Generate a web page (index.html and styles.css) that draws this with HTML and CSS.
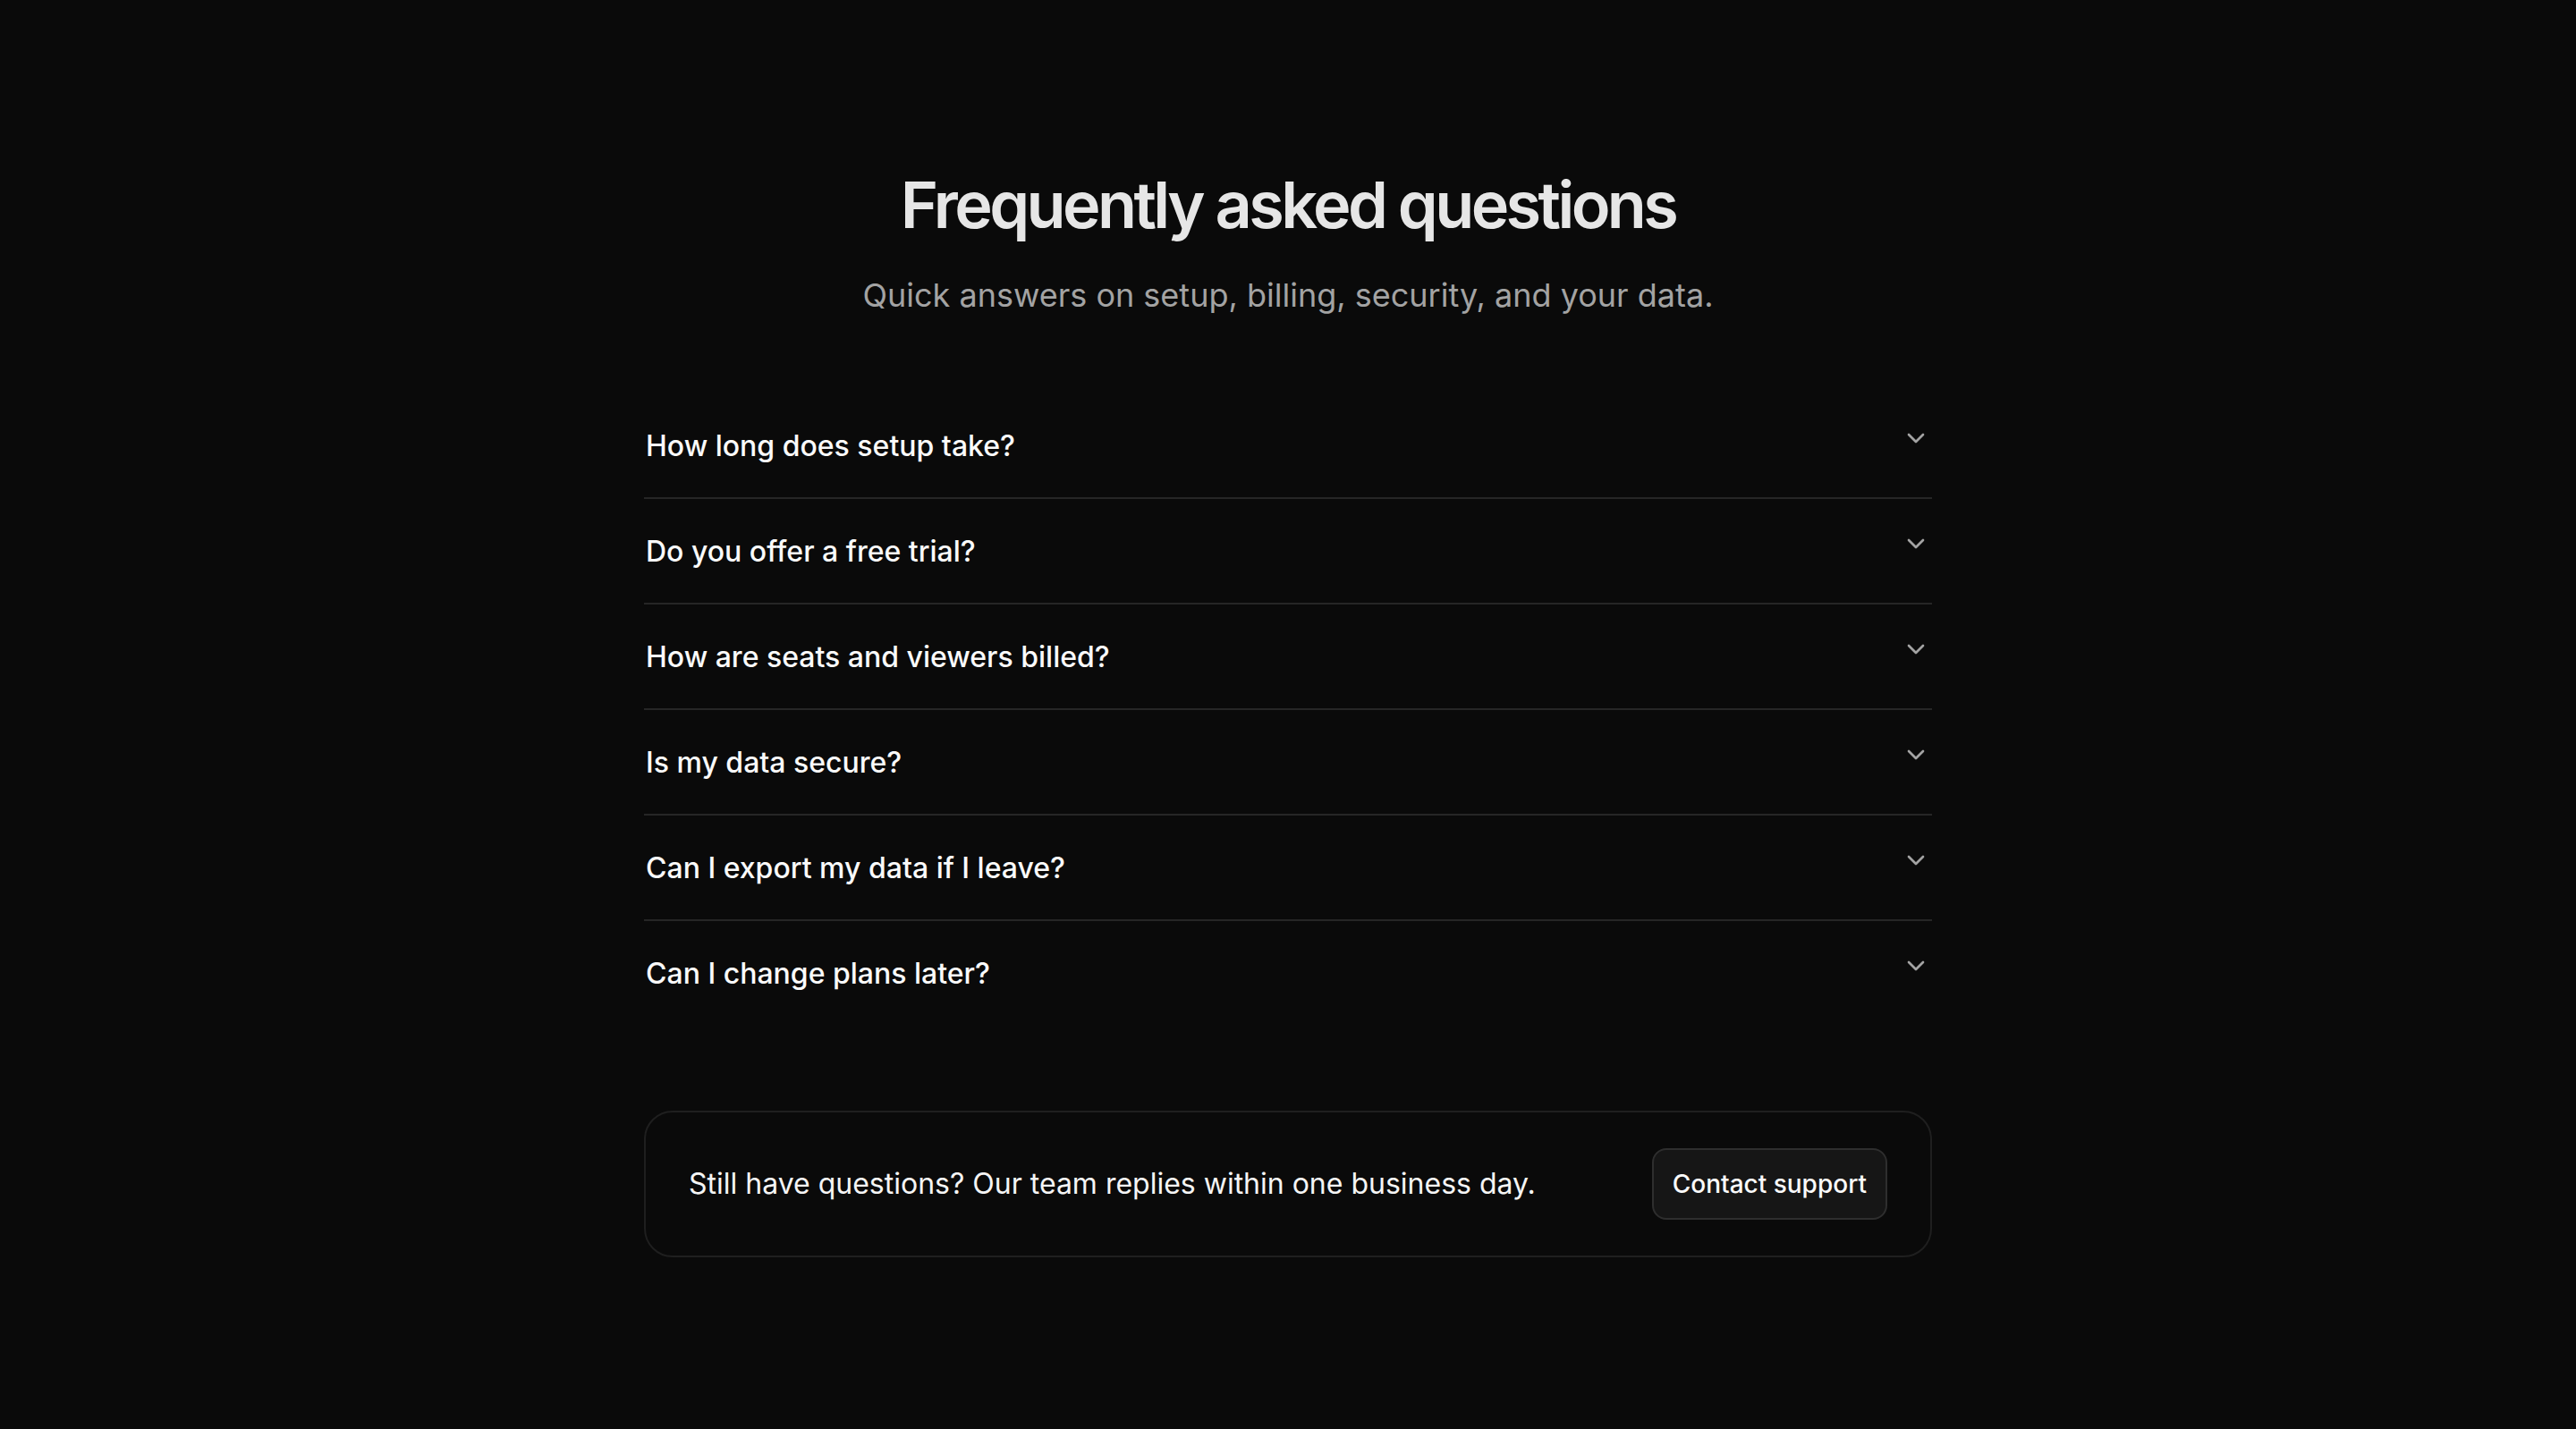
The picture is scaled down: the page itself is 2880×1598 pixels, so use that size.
FILE: index.html
```html
<!DOCTYPE html>
<html lang="en">
<head>
<meta charset="utf-8">
<title>FAQ</title>
<link rel="stylesheet" href="styles.css">
</head>
<body>
<main class="faq">
  <header class="faq-head">
    <h1 class="faq-title">Frequently asked questions</h1>
    <p class="faq-sub">Quick answers on setup, billing, security, and your data.</p>
  </header>
  <ul class="faq-list">
    <li class="faq-item"><span class="faq-q">How long does setup take?</span><svg class="chev" viewBox="0 0 24 24" fill="none" stroke="currentColor" stroke-width="2" stroke-linecap="round" stroke-linejoin="round"><path d="m6 9 6 6 6-6"/></svg></li>
    <li class="faq-item"><span class="faq-q">Do you offer a free trial?</span><svg class="chev" viewBox="0 0 24 24" fill="none" stroke="currentColor" stroke-width="2" stroke-linecap="round" stroke-linejoin="round"><path d="m6 9 6 6 6-6"/></svg></li>
    <li class="faq-item"><span class="faq-q">How are seats and viewers billed?</span><svg class="chev" viewBox="0 0 24 24" fill="none" stroke="currentColor" stroke-width="2" stroke-linecap="round" stroke-linejoin="round"><path d="m6 9 6 6 6-6"/></svg></li>
    <li class="faq-item"><span class="faq-q">Is my data secure?</span><svg class="chev" viewBox="0 0 24 24" fill="none" stroke="currentColor" stroke-width="2" stroke-linecap="round" stroke-linejoin="round"><path d="m6 9 6 6 6-6"/></svg></li>
    <li class="faq-item"><span class="faq-q">Can I export my data if I leave?</span><svg class="chev" viewBox="0 0 24 24" fill="none" stroke="currentColor" stroke-width="2" stroke-linecap="round" stroke-linejoin="round"><path d="m6 9 6 6 6-6"/></svg></li>
    <li class="faq-item"><span class="faq-q">Can I change plans later?</span><svg class="chev" viewBox="0 0 24 24" fill="none" stroke="currentColor" stroke-width="2" stroke-linecap="round" stroke-linejoin="round"><path d="m6 9 6 6 6-6"/></svg></li>
  </ul>
  <div class="support">
    <p class="support-text">Still have questions? Our team replies within one business day.</p>
    <button class="support-btn" type="button">Contact support</button>
  </div>
</main>
</body>
</html>
```
FILE: styles.css
```css
* { box-sizing: border-box; }
html, body {
  margin: 0;
  padding: 0;
  background: #0a0a0a;
  font-family: Inter, "Noto Sans", "Liberation Sans", sans-serif;
  color: #f5f5f5;
}
.faq {
  width: 1440px;
  margin: 0 auto;
  padding-top: 189px;
  padding-bottom: 100px;
}
.faq-head {
  text-align: center;
}
.faq-title {
  margin: 0;
  font-size: 72px;
  line-height: 80px;
  font-weight: 600;
  letter-spacing: -0.05em;
  color: #e6e6e6;
}
.faq-sub {
  margin: 33px 0 0;
  font-size: 36px;
  line-height: 56px;
  color: #a3a3a3;
}
.faq-list {
  list-style: none;
  margin: 82px 0 0;
  padding: 0;
}
.faq-item {
  display: flex;
  align-items: flex-start;
  justify-content: space-between;
  padding: 35px 0 33px 2px;
  border-bottom: 2px solid #262626;
}
.faq-item:last-child {
  border-bottom: none;
}
.faq-q {
  font-size: 32px;
  line-height: 48px;
  font-weight: 500;
  color: #fafafa;
}
.chev {
  width: 32px;
  height: 32px;
  flex-shrink: 0;
  margin-top: -1px;
  margin-right: 2px;
  color: #a3a3a3;
}
.support {
  margin-top: 96px;
  display: flex;
  align-items: center;
  justify-content: space-between;
  padding: 40px 48px;
  border: 2px solid #1f1f1f;
  border-radius: 32px;
}
.support-text {
  margin: 0;
  font-size: 32px;
  line-height: 48px;
  color: #f5f5f5;
}
.support-btn {
  height: 80px;
  padding: 0 21px;
  border: 2px solid #2e2e2e;
  border-radius: 16px;
  background: #161616;
  color: #fafafa;
  font-family: inherit;
  font-size: 28px;
  font-weight: 500;
  line-height: 76px;
}
```
